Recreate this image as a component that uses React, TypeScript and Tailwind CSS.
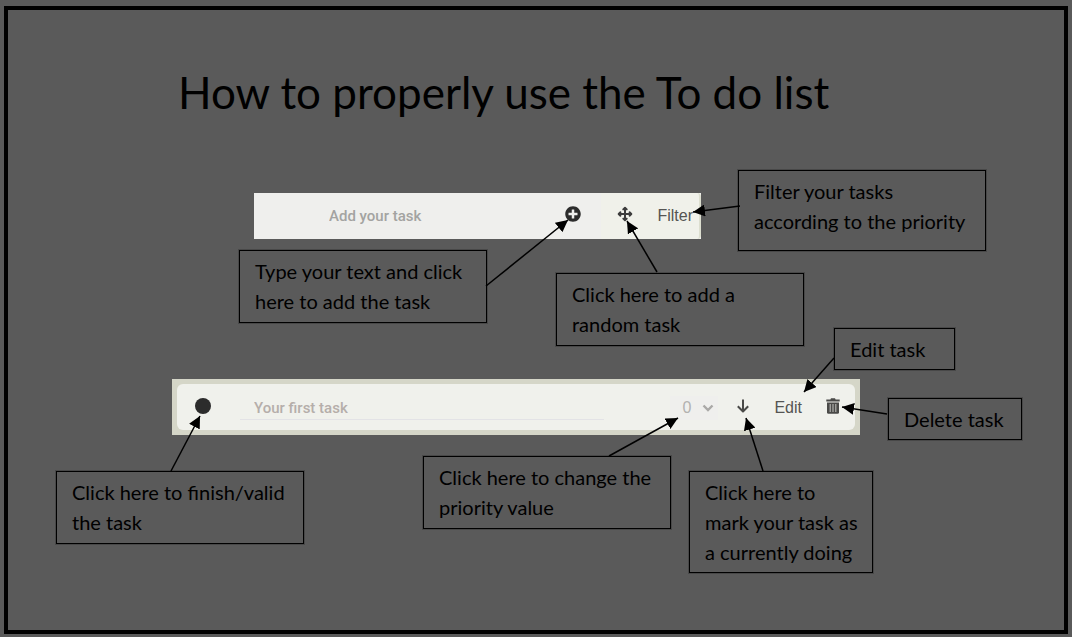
import type { ReactNode } from "react";
import { FaPlusCircle } from "react-icons/fa";

type Arrow = { from: [number, number]; to: [number, number] };

const arrows: Arrow[] = [
  { from: [478, 276], to: [560, 210] },
  { from: [649, 262], to: [619, 211] },
  { from: [732, 196], to: [685, 202] },
  { from: [826, 348], to: [796, 382] },
  { from: [879, 404], to: [834, 397] },
  { from: [163, 461], to: [192, 406] },
  { from: [601, 446], to: [670, 408] },
  { from: [755, 461], to: [738, 408] },
];

function Callout({ place, children }: { place: string; children: ReactNode }) {
  return (
    <p
      className={`absolute border border-black pt-[5px] pb-[5px] pl-[15px] text-xl leading-[30px] text-black shadow-[0_0_0_1px_#484848] ${place}`}
    >
      {children}
    </p>
  );
}

function Arrows() {
  return (
    <svg className="pointer-events-none absolute inset-0 h-full w-full" aria-hidden="true">
      <defs>
        <marker
          id="head"
          markerUnits="userSpaceOnUse"
          markerWidth="13"
          markerHeight="12"
          refX="12"
          refY="6"
          orient="auto"
        >
          <path d="M0 0 L12 6 L0 12 Z" fill="#000" />
        </marker>
      </defs>
      {arrows.map(({ from, to }) => (
        <line
          key={from.join()}
          x1={from[0]}
          y1={from[1]}
          x2={to[0]}
          y2={to[1]}
          stroke="#000"
          strokeWidth="1.5"
          markerEnd="url(#head)"
        />
      ))}
    </svg>
  );
}

function MoveIcon() {
  return (
    <svg viewBox="0 0 16 16" className="size-4" aria-hidden="true">
      <path d="M8 2.5 V13.5 M2.5 8 H13.5" stroke="currentColor" strokeWidth="2" />
      <path
        d="M8 1.6 L9.8 3.4 H6.2 Z M8 14.4 L9.8 12.6 H6.2 Z M1.6 8 L3.4 6.2 V9.8 Z M14.4 8 L12.6 6.2 V9.8 Z"
        fill="currentColor"
        stroke="currentColor"
        strokeWidth="1.8"
        strokeLinejoin="round"
      />
    </svg>
  );
}

function ChevronIcon() {
  return (
    <svg viewBox="0 0 12 8" className="pointer-events-none -ml-4 h-2 w-3" aria-hidden="true">
      <path d="M1.5 1.5 L6 6 L10.5 1.5" fill="none" stroke="#aaa9a7" strokeWidth="2.4" />
    </svg>
  );
}

function DownIcon() {
  return (
    <svg viewBox="0 0 14 16" className="h-4 w-[14px]" aria-hidden="true">
      <path
        d="M7 1.5 V13 M1.8 8.3 L7 13.5 L12.2 8.3"
        fill="none"
        stroke="#4a4a48"
        strokeWidth="2"
        strokeLinejoin="round"
      />
    </svg>
  );
}

function TrashIcon() {
  return (
    <svg viewBox="0 0 14 16" className="h-4 w-[14px]" aria-hidden="true">
      <path d="M0.3 1.6 H4.4 L5 0.3 H9 L9.6 1.6 H13.7 V3.6 H0.3 Z" fill="#4a4a48" />
      <path d="M1 4.6 H13 V14.4 Q13 15.8 11.6 15.8 H2.4 Q1 15.8 1 14.4 Z" fill="#4a4a48" />
      <path d="M4.2 6 V14 M7 6 V14 M9.8 6 V14" stroke="#b9b9b5" strokeWidth="1.1" />
    </svg>
  );
}

function AddBar() {
  return (
    <form
      className="mt-[71px] ml-[246px] flex h-[46px] w-[447px] items-center bg-[#efefed]"
      onSubmit={(e) => e.preventDefault()}
    >
      <input
        aria-label="New task"
        placeholder="Add your task"
        className="h-full min-w-0 flex-1 bg-transparent pl-[75px] font-[Roboto,sans-serif] text-[15px] font-medium text-[#555] outline-none placeholder:text-[#a3a3a1]"
      />
      <button type="submit" aria-label="Add task" className="mr-5 mb-1 text-[#2c2c2c]">
        <FaPlusCircle size={16} />
      </button>
      <div className="flex h-full items-center rounded-r border-r-2 border-[#dcdecf] bg-[#f0f1ea] pr-[6px] pl-4">
        <button type="button" aria-label="Add random task" className="mb-1 text-[#3c3c3c]">
          <MoveIcon />
        </button>
        <button
          type="button"
          className="ml-6 font-['Liberation_Sans',sans-serif] text-base text-[#555553]"
        >
          Filter
        </button>
      </div>
    </form>
  );
}

function TaskRow() {
  return (
    <div className="mt-[140px] ml-[164px] h-14 w-[688px] bg-[#d5d6c8] p-[5px]">
      <div className="flex h-full items-center rounded-md bg-[#f0f1ec] pt-0.5 pr-[15px] pl-[18px]">
        <button
          type="button"
          aria-label="Finish task"
          className="mb-1 size-4 rounded-full bg-[#2c2c2c]"
        />
        <input
          aria-label="Task"
          defaultValue="Your first task"
          className="ml-[29px] h-6 w-[364px] border-b border-[#e3e3e6] bg-transparent pl-[14px] font-[Roboto,sans-serif] text-[15px] font-medium text-[#b5aeaa] outline-none"
        />
        <div className="ml-auto flex items-center">
          <select
            aria-label="Priority"
            className="w-12 appearance-none bg-[#efefed] pl-3 font-['Liberation_Sans',sans-serif] text-base text-[#b3b2b0]"
          >
            <option>0</option>
            <option>1</option>
            <option>2</option>
          </select>
          <ChevronIcon />
        </div>
        <button type="button" aria-label="Mark as doing" className="mb-1 ml-[22px]">
          <DownIcon />
        </button>
        <button
          type="button"
          className="ml-6 font-['Liberation_Sans',sans-serif] text-base text-[#555553]"
        >
          Edit
        </button>
        <button type="button" aria-label="Delete task" className="mb-1 ml-6">
          <TrashIcon />
        </button>
      </div>
    </div>
  );
}

export default function App() {
  return (
    <main className="flex min-h-screen bg-[#5a5a5a] px-1 pt-[6px] pb-[3px] font-[Lato,sans-serif] text-black">
      <div className="flex-1 border-4 border-black">
        <div className="relative mx-auto h-full max-w-[1056px]">
          <h1 className="pt-[52px] pl-[170px] text-[44px] leading-[60px]">
            How to properly use the To do list
          </h1>
          <AddBar />
          <TaskRow />
          <Callout place="left-[730px] top-[160px] w-[248px] min-h-[81px]">
            Filter your tasks
            <br />
            according to the priority
          </Callout>
          <Callout place="left-[231px] top-[240px] w-[248px] min-h-[73px]">
            Type your text and click
            <br />
            here to add the task
          </Callout>
          <Callout place="left-[548px] top-[263px] w-[248px] min-h-[73px]">
            Click here to add a<br />
            random task
          </Callout>
          <Callout place="left-[826px] top-[318px] w-[121px]">Edit task</Callout>
          <Callout place="left-[880px] top-[388px] w-[134px]">Delete task</Callout>
          <Callout place="left-[48px] top-[461px] w-[248px] min-h-[73px]">
            Click here to finish/valid
            <br />
            the task
          </Callout>
          <Callout place="left-[415px] top-[446px] w-[248px] min-h-[73px]">
            Click here to change the
            <br />
            priority value
          </Callout>
          <Callout place="left-[681px] top-[461px] w-[184px]">
            Click here to
            <br />
            mark your task as
            <br />a currently doing
          </Callout>
          <Arrows />
        </div>
      </div>
    </main>
  );
}
